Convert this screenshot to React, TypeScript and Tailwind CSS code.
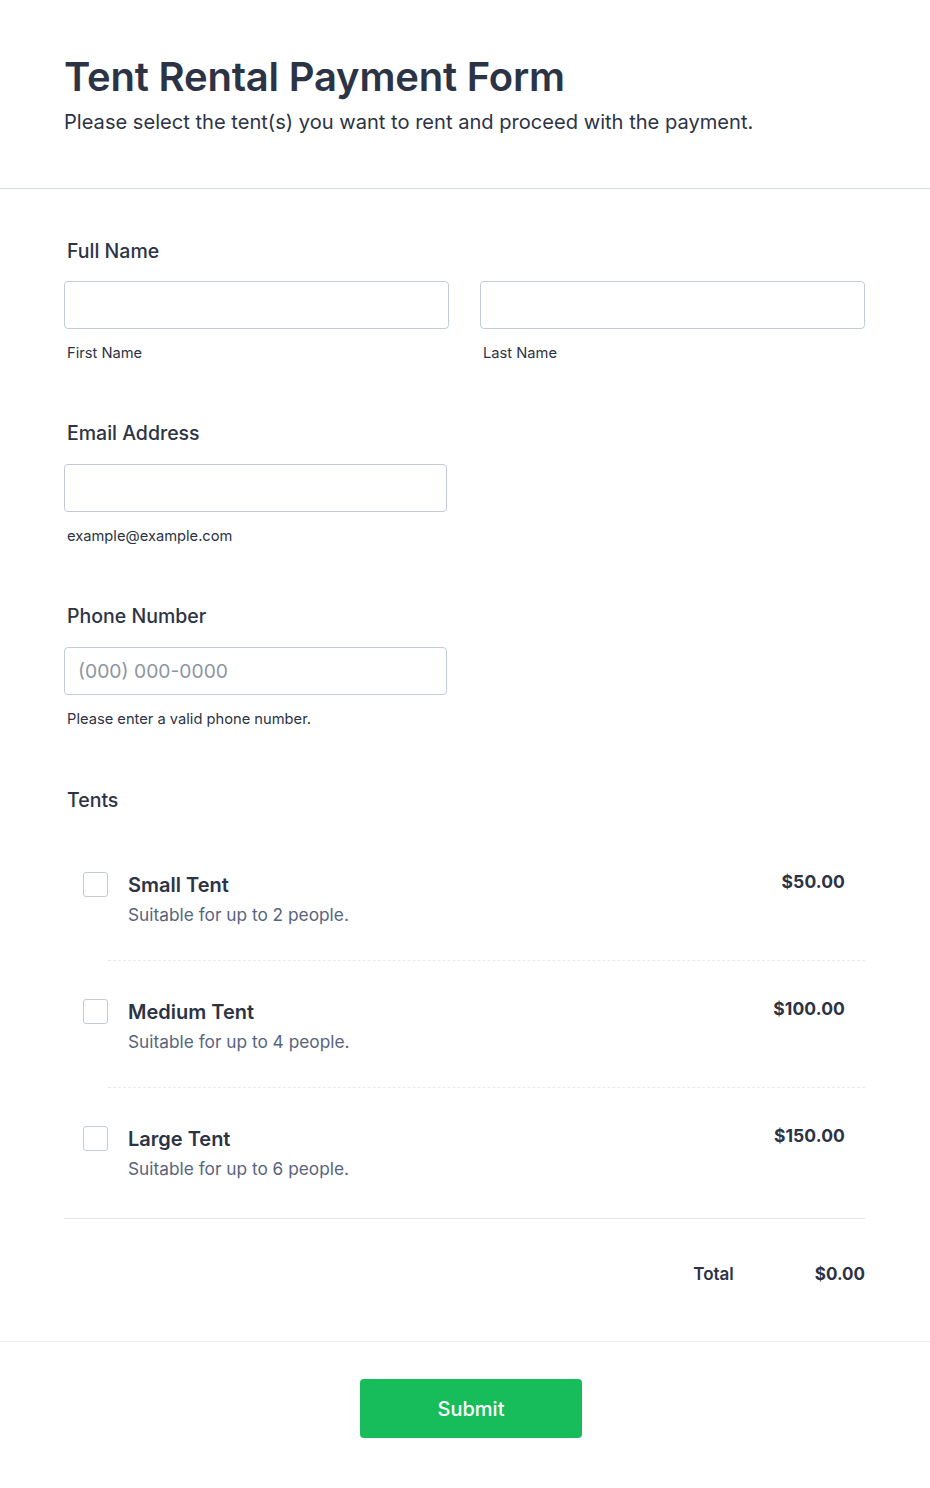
import React from "react";

const tents = [
  { name: "Small Tent", desc: "Suitable for up to 2 people.", price: "$50.00" },
  { name: "Medium Tent", desc: "Suitable for up to 4 people.", price: "$100.00" },
  { name: "Large Tent", desc: "Suitable for up to 6 people.", price: "$150.00" },
];

function Label({ children }: { children: React.ReactNode }) {
  return (
    <div className="pl-[3px] text-[19.5px] leading-[24px] font-medium text-[#2c3345]">{children}</div>
  );
}

function Sub({ children }: { children: React.ReactNode }) {
  return <div className="pl-[3px] mt-[14px] text-[14.7px] leading-[20px] text-[#2c3345]">{children}</div>;
}

export default function App() {
  return (
    <div className="w-[930px] bg-white text-[#2c3345]" style={{ fontFamily: "Inter, 'Noto Sans', sans-serif" }}>
      <div className="px-[64px] pt-[53px] pb-[52px] border-b border-[#d8dee9]">
        <h1 className="text-[40px] leading-[48px] font-semibold tracking-[-0.2px] text-[#2c3345]">Tent Rental Payment Form</h1>
        <p className="mt-[7px] text-[20.1px] leading-[28px] text-[#2c3345]">
          Please select the tent(s) you want to rent and proceed with the payment.
        </p>
      </div>

      <div className="pl-[64px] pr-[65px] pt-[50px]">
        <Label>Full Name</Label>
        <div className="mt-[18px] grid grid-cols-2 gap-[31px]">
          <div>
            <input className="block w-full h-[48px] rounded-[4px] border border-[#c3cad8] px-4 outline-none" />
            <Sub>First Name</Sub>
          </div>
          <div>
            <input className="block w-full h-[48px] rounded-[4px] border border-[#c3cad8] px-4 outline-none" />
            <Sub>Last Name</Sub>
          </div>
        </div>

        <div className="mt-[58px]">
          <Label>Email Address</Label>
          <input className="mt-[19px] block w-[383px] h-[48px] rounded-[4px] border border-[#c3cad8] px-4 outline-none" />
          <Sub>example@example.com</Sub>
        </div>

        <div className="mt-[58px]">
          <Label>Phone Number</Label>
          <input
            placeholder="(000) 000-0000"
            className="mt-[19px] block w-[383px] h-[48px] rounded-[4px] border border-[#c3cad8] px-[13px] text-[19.3px] outline-none placeholder:text-[#8d95a5]"
          />
          <Sub>Please enter a valid phone number.</Sub>
        </div>

        <div className="mt-[59px]">
          <Label>Tents</Label>
          <div className="mt-[22px] border-b border-[#e3e5ee]">
            {tents.map((t, i) => (
              <div
                key={t.name}
                className={
                  i < tents.length - 1
                    ? "ml-[44px] pt-[37px] pb-[33px] border-b border-dashed border-[#e8eaf0] flex items-start"
                    : "ml-[44px] pt-[37px] pb-[37px] flex items-start"
                }
              >
                <div className="-ml-[25px] mt-[1px] w-[25px] h-[25px] shrink-0 rounded-[3px] border border-[#c3cad8] bg-white" />
                <div className="ml-[20px] flex-1">
                  <div className="text-[20px] leading-[28px] font-semibold text-[#2c3345]">{t.name}</div>
                  <div className="mt-[4px] text-[17.3px] leading-[24px] text-[#57647e]">{t.desc}</div>
                </div>
                <div className="pr-[20px] -mt-[1px] text-[17.5px] leading-[24px] font-bold tracking-[0.1px] text-[#2c3345]">{t.price}</div>
              </div>
            ))}
          </div>
          <div className="pt-[43px] pb-[55px] flex justify-end items-center">
            <div className="text-[17px] leading-[24px] font-semibold text-[#2c3345]">Total</div>
            <div className="ml-[81px] text-[17px] leading-[24px] font-bold text-[#2c3345]">$0.00</div>
          </div>
        </div>
      </div>

      <div className="border-t border-[#ececf3] pt-[37px] pb-[50px] pl-[12px] flex justify-center">
        <button className="w-[222px] h-[59px] rounded-[4px] bg-[#18bd5b] text-white text-[20px] font-medium">
          Submit
        </button>
      </div>
    </div>
  );
}
